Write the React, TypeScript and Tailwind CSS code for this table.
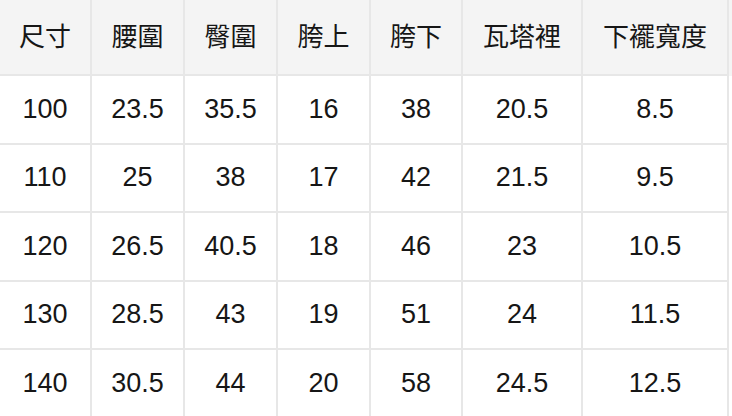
import React from "react";

const widths = ["w-[92px]", "w-[93px]", "w-[93px]", "w-[93px]", "w-[92px]", "w-[120px]", "w-[146px]"];
const header = ["尺寸", "腰圍", "臀圍", "胯上", "胯下", "瓦塔裡", "下襬寬度"];
const rows = [
  ["100", "23.5", "35.5", "16", "38", "20.5", "8.5"],
  ["110", "25", "38", "17", "42", "21.5", "9.5"],
  ["120", "26.5", "40.5", "18", "46", "23", "10.5"],
  ["130", "28.5", "43", "19", "51", "24", "11.5"],
  ["140", "30.5", "44", "20", "58", "24.5", "12.5"],
];

export default function App() {
  return (
    <div
      className="w-[732px] h-[416px] overflow-hidden bg-white text-[#161616]"
      style={{ fontFamily: '"Liberation Sans", "Noto Sans CJK TC", sans-serif' }}
    >
      <div className="flex h-[76px] bg-[#f4f4f4]">
        {header.map((h, i) => (
          <div
            key={i}
            className={`${widths[i]} shrink-0 flex items-center justify-center border-r-2 border-b-2 border-[#e7e7e7] text-[26px] leading-none`}
          >
            {h}
          </div>
        ))}
      </div>
      {rows.map((r, ri) => (
        <div key={ri} className="flex h-[68.5px]">
          {r.map((c, i) => (
            <div
              key={i}
              className={`${widths[i]} shrink-0 flex items-center justify-center border-r-2 border-b-2 border-[#e7e7e7] text-[27px] leading-none`}
            >
              {c}
            </div>
          ))}
        </div>
      ))}
    </div>
  );
}
